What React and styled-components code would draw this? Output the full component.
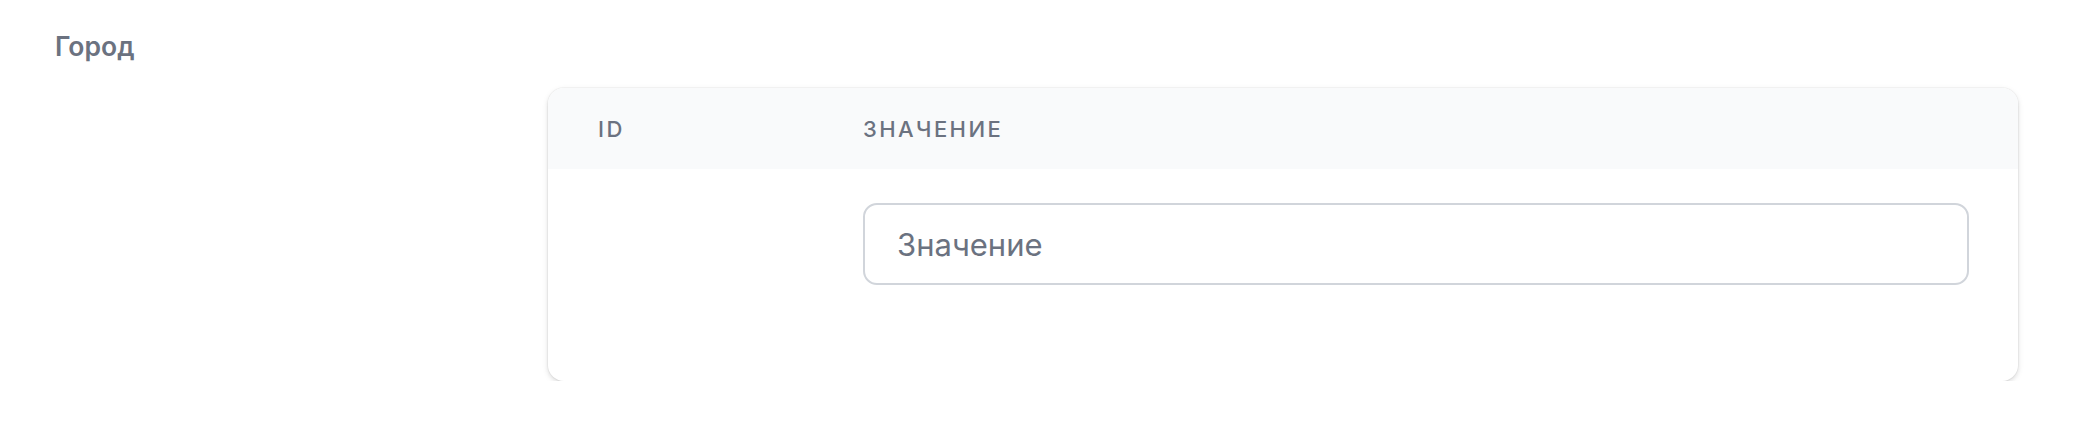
import React from "react";
import styled, { createGlobalStyle } from "styled-components";

const Global = createGlobalStyle`
  html, body { margin: 0; padding: 0; background: #ffffff; }
  body { font-family: Inter, "Noto Sans", "Liberation Sans", sans-serif; -webkit-font-smoothing: antialiased; }
  * { box-sizing: border-box; }
`;

const Page = styled.div`
  width: 2080px;
  padding: 30px 62px 0 55px;
`;

const Label = styled.div`
  font-size: 26.5px;
  line-height: 32px;
  font-weight: 600;
  color: #6b7280;
`;

const FieldRow = styled.div`
  display: grid;
  grid-template-columns: 493px 1fr;
  margin-top: 26px;
`;

const Card = styled.div`
  grid-column: 2;
  background: #ffffff;
  border-radius: 16px;
  overflow: hidden;
  box-shadow: 0 0 0 1px rgba(0, 0, 0, 0.03), 0 2px 6px rgba(0, 0, 0, 0.1), 0 2px 4px rgba(0, 0, 0, 0.06);
`;

const Table = styled.table`
  width: 100%;
  border-collapse: collapse;
  table-layout: fixed;
`;

const Head = styled.thead`
  background: #f9fafb;
`;

const Th = styled.th`
  width: ${(p) => p.$w || "auto"};
  height: 81px;
  padding: 0 49px 0 50px;
  text-align: left;
  vertical-align: middle;
  font-size: 22px;
  line-height: 30px;
  font-weight: 500;
  letter-spacing: 0.11em;
  text-transform: uppercase;
  color: #6b7280;
`;

const Td = styled.td`
  padding: 34px 49px 96px 50px;
  vertical-align: top;
`;

const Input = styled.input`
  display: block;
  width: 100%;
  height: 82px;
  padding: 0 32px;
  border: 2px solid #d1d5db;
  border-radius: 14px;
  background: #ffffff;
  font-family: Inter, "Noto Sans", "Liberation Sans", sans-serif;
  font-size: 31px;
  color: #111827;
  outline: none;
  &::placeholder { color: #6b7280; opacity: 1; }
`;

export default function App() {
  return (
    <>
      <Global />
      <Page>
        <Label>Город</Label>
        <FieldRow>
          <Card>
            <Table>
              <Head>
                <tr>
                  <Th $w="265px">ID</Th>
                  <Th>Значение</Th>
                </tr>
              </Head>
              <tbody>
                <tr>
                  <Td></Td>
                  <Td>
                    <Input placeholder="Значение" />
                  </Td>
                </tr>
              </tbody>
            </Table>
          </Card>
        </FieldRow>
      </Page>
    </>
  );
}
